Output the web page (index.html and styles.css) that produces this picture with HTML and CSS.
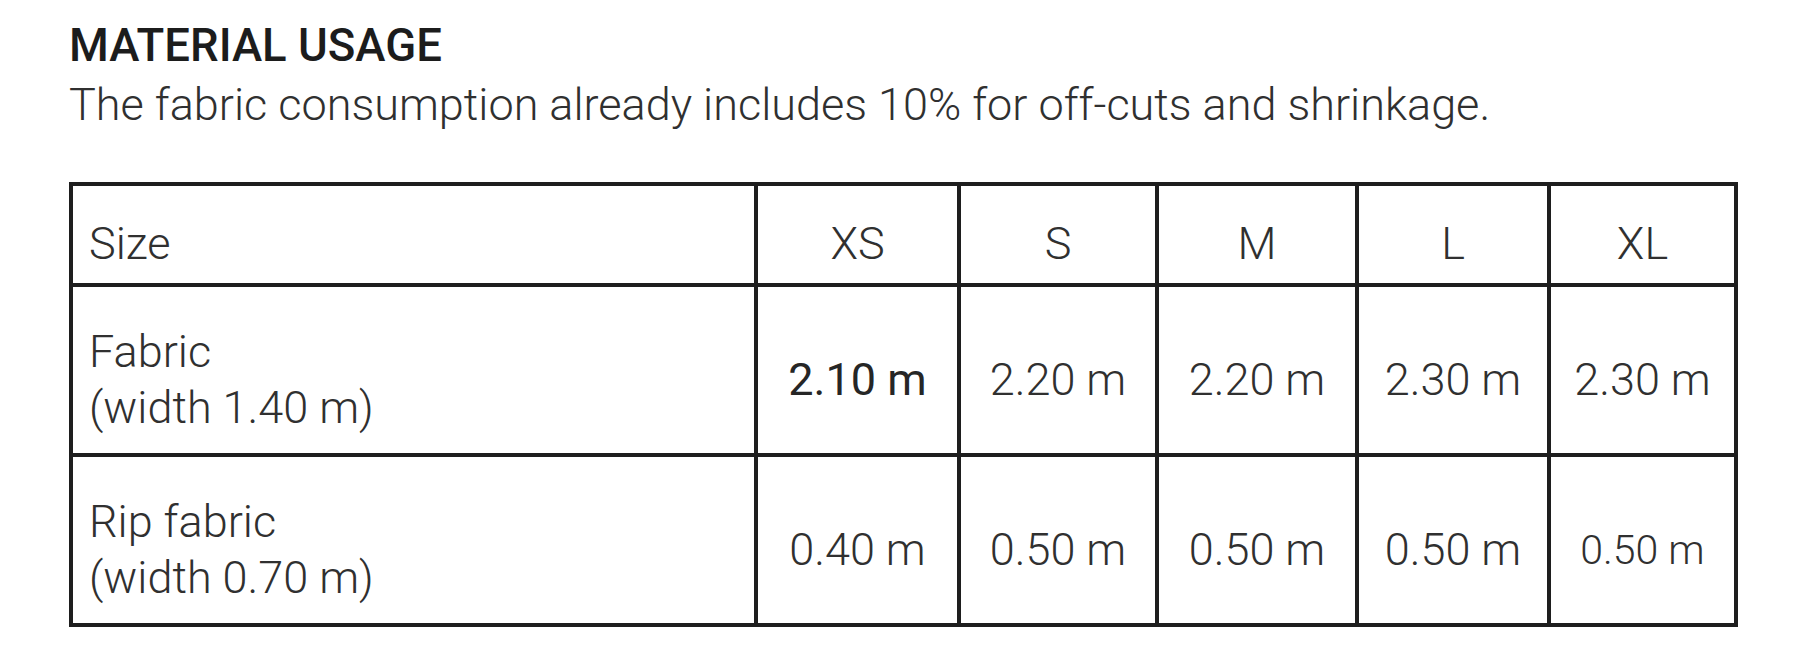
FILE: index.html
```html
<!DOCTYPE html>
<html lang="en">
<head>
<meta charset="utf-8">
<title>Material usage</title>
<link rel="stylesheet" href="styles.css">
</head>
<body>
<section class="usage">
  <h1 class="usage-title">MATERIAL USAGE</h1>
  <p class="usage-note">The fabric consumption already includes 10% for off-cuts and shrinkage.</p>
  <table class="usage-table">
    <thead>
      <tr class="row-head">
        <th class="cell cell-label col-label">Size</th>
        <th class="cell cell-value col-xs">XS</th>
        <th class="cell cell-value col-s">S</th>
        <th class="cell cell-value col-m">M</th>
        <th class="cell cell-value col-l">L</th>
        <th class="cell cell-value col-xl">XL</th>
      </tr>
    </thead>
    <tbody>
      <tr class="row-body">
        <td class="cell cell-label">Fabric<br>(width 1.40 m)</td>
        <td class="cell cell-value cell-strong">2.10 m</td>
        <td class="cell cell-value">2.20 m</td>
        <td class="cell cell-value">2.20 m</td>
        <td class="cell cell-value">2.30 m</td>
        <td class="cell cell-value">2.30 m</td>
      </tr>
      <tr class="row-body">
        <td class="cell cell-label">Rip fabric<br>(width 0.70 m)</td>
        <td class="cell cell-value">0.40 m</td>
        <td class="cell cell-value">0.50 m</td>
        <td class="cell cell-value">0.50 m</td>
        <td class="cell cell-value">0.50 m</td>
        <td class="cell cell-value cell-small">0.50 m</td>
      </tr>
    </tbody>
  </table>
</section>
</body>
</html>
```
FILE: styles.css
```css
html, body {
  margin: 0;
  padding: 0;
  background: #ffffff;
}

body {
  font-family: Roboto, "Liberation Sans", Arial, sans-serif;
  color: #1c1c1c;
}

.usage {
  padding: 18px 0 0 69px;
}

.usage-title {
  margin: 0;
  font-size: 45.5px;
  font-weight: 500;
  line-height: 56px;
  color: #1c1c1c;
}

.usage-note {
  margin: 0;
  font-size: 45px;
  font-weight: 300;
  line-height: 61px;
  color: #303030;
}

.usage-table {
  margin-top: 47px;
  width: 1669px;
  table-layout: fixed;
  border-collapse: separate;
  border-spacing: 0;
  border-top: 4px solid #1e1e1e;
  border-left: 4px solid #1e1e1e;
}

.cell {
  box-sizing: border-box;
  border-right: 4px solid #1e1e1e;
  border-bottom: 4px solid #1e1e1e;
  padding: 19px 0 0 0;
  font-size: 45px;
  font-weight: 300;
  line-height: 56px;
  vertical-align: middle;
  color: #303030;
}

.row-head .cell {
  height: 101px;
}

.row-body .cell {
  height: 170px;
}

.cell-label {
  text-align: left;
  padding-left: 16px;
}

.cell-value {
  text-align: center;
}

.col-label { width: 685px; }
.col-xs { width: 203px; }
.col-s { width: 198px; }
.col-m { width: 200px; }
.col-l { width: 192px; }
.col-xl { width: 187px; }

.cell-strong {
  font-weight: 400;
  color: #262626;
}

.cell-small {
  font-size: 41px;
}
```
